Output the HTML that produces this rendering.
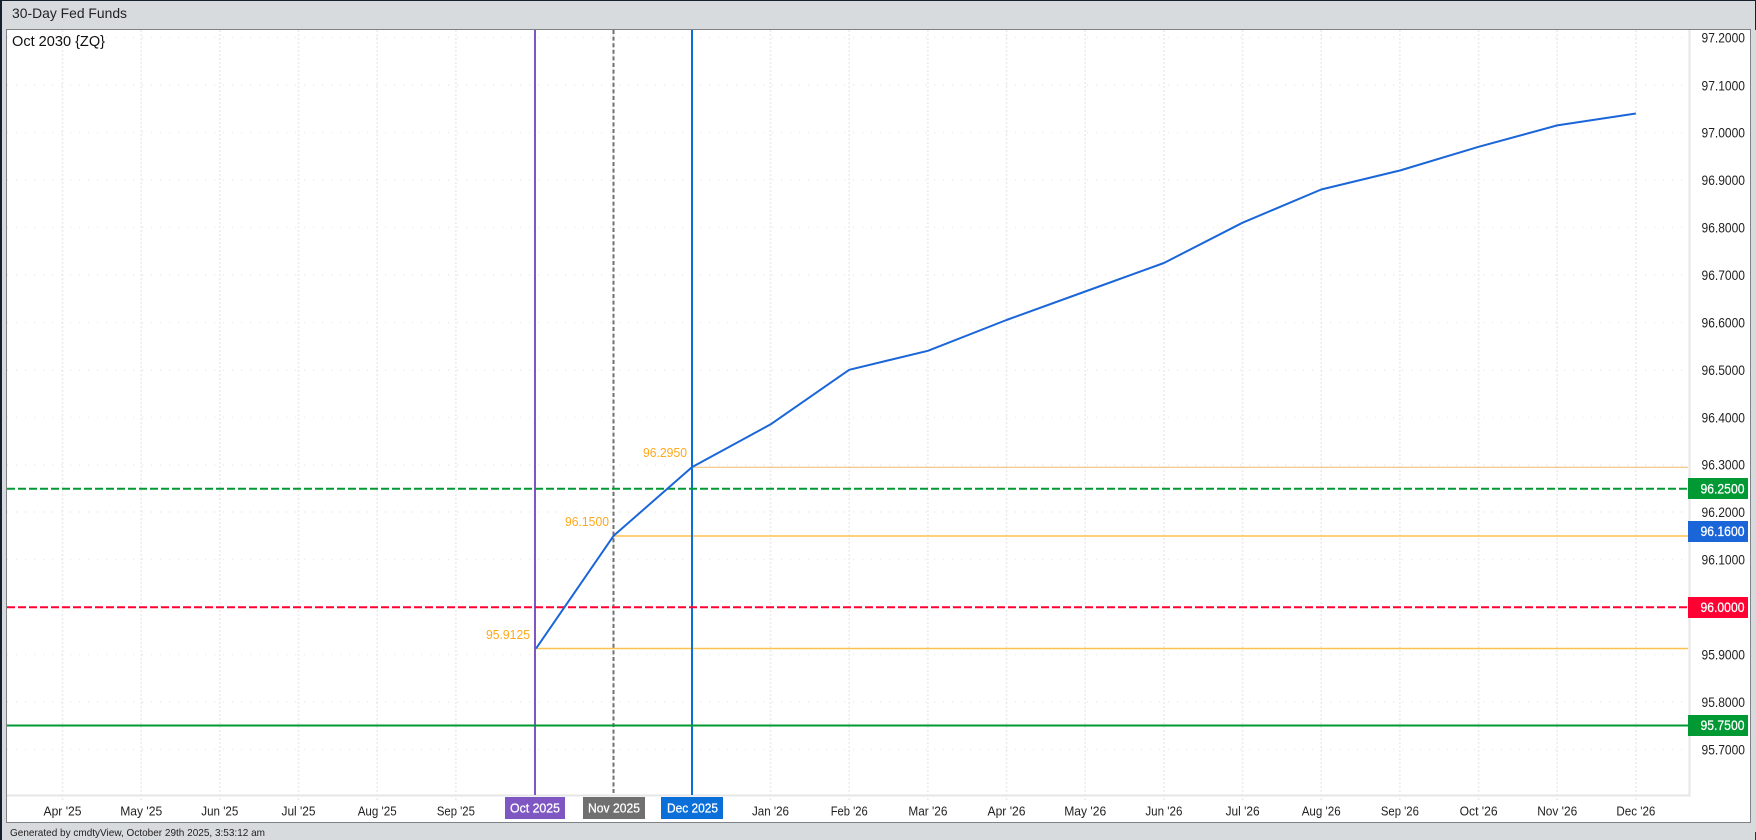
<!DOCTYPE html>
<html>
<head>
<meta charset="utf-8">
<title>30-Day Fed Funds</title>
<style>
html,body{margin:0;padding:0;background:#d8dbde;}
svg{display:block;}
text{font-family:"Liberation Sans",Arial,sans-serif;}
</style>
</head>
<body>
<svg width="1756" height="840" viewBox="0 0 1756 840" xmlns="http://www.w3.org/2000/svg">
<rect width="1756" height="840" fill="#d8dbde"/>
<path d="M0 0.5H1756" stroke="#15202c" stroke-width="1"/>
<path d="M1 0V840" stroke="#15202c" stroke-width="2"/>
<path d="M1755.5 0V30" stroke="#15202c" stroke-width="1"/>
<path d="M1755.5 832V840" stroke="#333" stroke-width="1"/>
<rect x="6.5" y="29.5" width="1744" height="793" fill="#fff" stroke="#7f8387" stroke-width="1"/>
<text x="12" y="18" font-size="14" fill="#222" textLength="115" lengthAdjust="spacingAndGlyphs">30-Day Fed Funds</text>
<text x="10" y="836" font-size="10.5" fill="#222" textLength="255" lengthAdjust="spacingAndGlyphs">Generated by cmdtyView, October 29th 2025, 3:53:12 am</text>

<path d="M7 37.5H1689M7 85H1689M7 132.5H1689M7 180H1689M7 227.5H1689M7 275H1689M7 322.5H1689M7 370H1689M7 417.5H1689M7 465H1689M7 512H1689M7 559.5H1689M7 607H1689M7 654.5H1689M7 702H1689M7 749.5H1689" stroke="#ececec" stroke-width="1.6" stroke-dasharray="1.2 7.8" fill="none"/>
<path d="M62.5 30V800M141.2 30V800M219.8 30V800M298.5 30V800M377.2 30V800M455.9 30V800M534.5 30V800M613.2 30V800M691.9 30V800M770.5 30V800M849.2 30V800M927.9 30V800M1006.5 30V800M1085.2 30V800M1163.9 30V800M1242.6 30V800M1321.2 30V800M1399.9 30V800M1478.6 30V800M1557.2 30V800M1635.9 30V800" stroke="#ececec" stroke-width="1.6" stroke-dasharray="2 2" fill="none"/>

<path d="M7 795.5H1689.5V30" stroke="#e6e6e6" stroke-width="2" fill="none"/>

<path d="M692 467.3H1688" stroke="#f0b96a" stroke-width="1"/>
<path d="M613.5 536H1688" stroke="#ffc14d" stroke-width="1.5"/>
<path d="M535 648.5H1688" stroke="#ffc14d" stroke-width="1.5"/>

<path d="M535 30V795" stroke="#7e57c2" stroke-width="2"/>
<path d="M613.5 30V795" stroke="#707070" stroke-width="2" stroke-dasharray="4 2.6"/>
<path d="M692 30V795" stroke="#0a6fd8" stroke-width="2"/>

<path d="M7 488.7H1688" stroke="#009933" stroke-width="2" stroke-dasharray="8 3"/>
<path d="M7 607.2H1688" stroke="#ff0033" stroke-width="2" stroke-dasharray="8 3"/>
<path d="M7 725.5H1688" stroke="#009933" stroke-width="2"/>

<polyline points="536,648.6 613.5,535.9 692,467.1 770.5,424.4 849.2,369.8 927.9,350.8 1006.5,320 1085.2,291.5 1163.9,263 1242.6,222.7 1321.2,189.5 1399.9,170.5 1478.6,146.8 1557.2,125.4 1635.9,113.5" fill="none" stroke="#1a66d9" stroke-width="2" stroke-linejoin="round"/>

<text x="12" y="46" font-size="15" fill="#111" textLength="93" lengthAdjust="spacingAndGlyphs">Oct 2030 {ZQ}</text>

<g font-size="13" fill="#ffa81a">
<text x="643" y="457" textLength="44" lengthAdjust="spacingAndGlyphs">96.2950</text>
<text x="565" y="526" textLength="44" lengthAdjust="spacingAndGlyphs">96.1500</text>
<text x="486" y="639" textLength="44" lengthAdjust="spacingAndGlyphs">95.9125</text>
</g>

<g font-size="13.5" fill="#222">
<text x="1701.5" y="42.5" textLength="43.5" lengthAdjust="spacingAndGlyphs">97.2000</text>
<text x="1701.5" y="90.5" textLength="43.5" lengthAdjust="spacingAndGlyphs">97.1000</text>
<text x="1701.5" y="137.5" textLength="43.5" lengthAdjust="spacingAndGlyphs">97.0000</text>
<text x="1701.5" y="185" textLength="43.5" lengthAdjust="spacingAndGlyphs">96.9000</text>
<text x="1701.5" y="232.5" textLength="43.5" lengthAdjust="spacingAndGlyphs">96.8000</text>
<text x="1701.5" y="280" textLength="43.5" lengthAdjust="spacingAndGlyphs">96.7000</text>
<text x="1701.5" y="327.5" textLength="43.5" lengthAdjust="spacingAndGlyphs">96.6000</text>
<text x="1701.5" y="375" textLength="43.5" lengthAdjust="spacingAndGlyphs">96.5000</text>
<text x="1701.5" y="422.5" textLength="43.5" lengthAdjust="spacingAndGlyphs">96.4000</text>
<text x="1701.5" y="469.5" textLength="43.5" lengthAdjust="spacingAndGlyphs">96.3000</text>
<text x="1701.5" y="517" textLength="43.5" lengthAdjust="spacingAndGlyphs">96.2000</text>
<text x="1701.5" y="564.5" textLength="43.5" lengthAdjust="spacingAndGlyphs">96.1000</text>
<text x="1701.5" y="659.5" textLength="43.5" lengthAdjust="spacingAndGlyphs">95.9000</text>
<text x="1701.5" y="707" textLength="43.5" lengthAdjust="spacingAndGlyphs">95.8000</text>
<text x="1701.5" y="754.5" textLength="43.5" lengthAdjust="spacingAndGlyphs">95.7000</text>
</g>

<rect x="1688" y="478" width="60" height="21" fill="#009933"/>
<rect x="1688" y="521" width="60" height="21" fill="#1a66d9"/>
<rect x="1688" y="597" width="60" height="21" fill="#ff0033"/>
<rect x="1688" y="715" width="60" height="21" fill="#009933"/>
<g font-size="13.5" fill="#fff" stroke="#fff" stroke-width="0.25">
<text x="1700.5" y="493.5" textLength="44" lengthAdjust="spacingAndGlyphs">96.2500</text>
<text x="1700.5" y="536" textLength="44" lengthAdjust="spacingAndGlyphs">96.1600</text>
<text x="1700.5" y="612" textLength="44" lengthAdjust="spacingAndGlyphs">96.0000</text>
<text x="1700.5" y="730" textLength="44" lengthAdjust="spacingAndGlyphs">95.7500</text>
</g>

<g font-size="13" fill="#222" text-anchor="middle" lengthAdjust="spacingAndGlyphs">
<text x="62.5" y="815.5" textLength="38" lengthAdjust="spacingAndGlyphs">Apr '25</text>
<text x="141.2" y="815.5" textLength="42" lengthAdjust="spacingAndGlyphs">May '25</text>
<text x="219.8" y="815.5" textLength="37" lengthAdjust="spacingAndGlyphs">Jun '25</text>
<text x="298.5" y="815.5" textLength="34" lengthAdjust="spacingAndGlyphs">Jul '25</text>
<text x="377.2" y="815.5" textLength="39" lengthAdjust="spacingAndGlyphs">Aug '25</text>
<text x="455.9" y="815.5" textLength="38" lengthAdjust="spacingAndGlyphs">Sep '25</text>
<text x="770.5" y="815.5" textLength="37" lengthAdjust="spacingAndGlyphs">Jan '26</text>
<text x="849.2" y="815.5" textLength="37" lengthAdjust="spacingAndGlyphs">Feb '26</text>
<text x="927.9" y="815.5" textLength="39" lengthAdjust="spacingAndGlyphs">Mar '26</text>
<text x="1006.5" y="815.5" textLength="38" lengthAdjust="spacingAndGlyphs">Apr '26</text>
<text x="1085.2" y="815.5" textLength="42" lengthAdjust="spacingAndGlyphs">May '26</text>
<text x="1163.9" y="815.5" textLength="37" lengthAdjust="spacingAndGlyphs">Jun '26</text>
<text x="1242.6" y="815.5" textLength="34" lengthAdjust="spacingAndGlyphs">Jul '26</text>
<text x="1321.2" y="815.5" textLength="39" lengthAdjust="spacingAndGlyphs">Aug '26</text>
<text x="1399.9" y="815.5" textLength="38" lengthAdjust="spacingAndGlyphs">Sep '26</text>
<text x="1478.6" y="815.5" textLength="38" lengthAdjust="spacingAndGlyphs">Oct '26</text>
<text x="1557.2" y="815.5" textLength="40" lengthAdjust="spacingAndGlyphs">Nov '26</text>
<text x="1635.9" y="815.5" textLength="39" lengthAdjust="spacingAndGlyphs">Dec '26</text>
</g>

<rect x="505" y="797" width="60" height="22" fill="#7e57c2"/>
<rect x="583" y="797" width="62" height="22" fill="#707070"/>
<rect x="661" y="797" width="62" height="22" fill="#0a6fd8"/>
<g font-size="13" fill="#fff" stroke="#fff" stroke-width="0.25">
<text x="510" y="812.5" textLength="50" lengthAdjust="spacingAndGlyphs">Oct 2025</text>
<text x="588" y="812.5" textLength="52" lengthAdjust="spacingAndGlyphs">Nov 2025</text>
<text x="667" y="812.5" textLength="51" lengthAdjust="spacingAndGlyphs">Dec 2025</text>
</g>
</svg>
</body>
</html>
